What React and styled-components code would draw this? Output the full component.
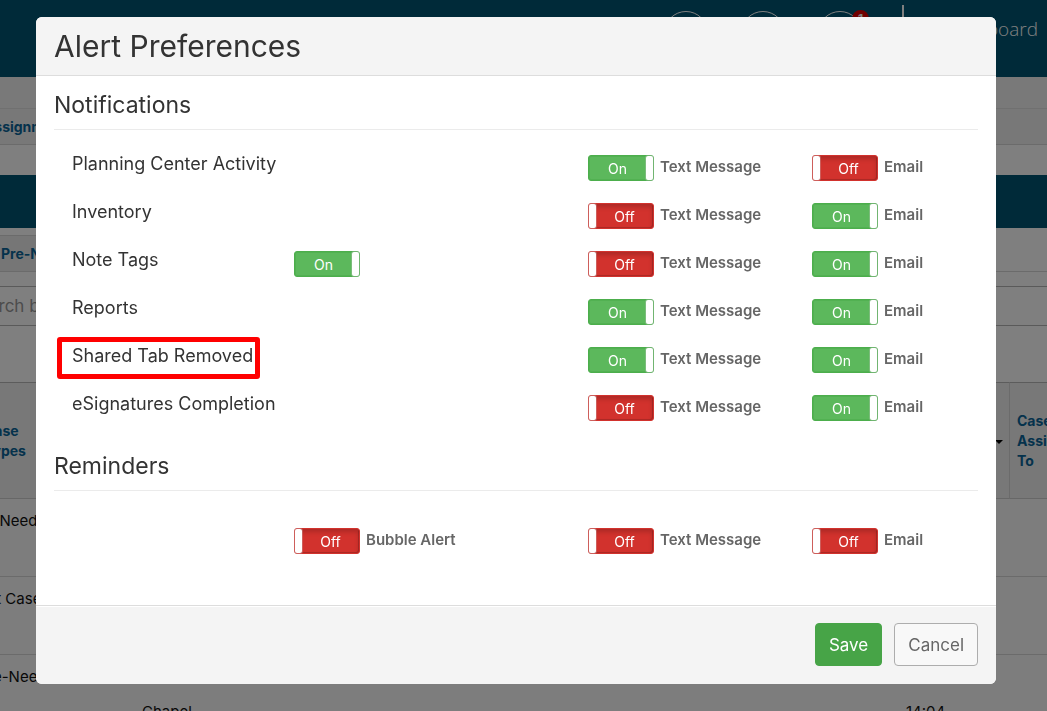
import React, { useState } from 'react';
import styled, { createGlobalStyle, css } from 'styled-components';

const ALERTS = [
	{ name: 'Planning Center Activity', text: true, email: false },
	{ name: 'Inventory', text: false, email: true },
	{ name: 'Note Tags', bubble: true, text: false, email: true },
	{ name: 'Reports', text: true, email: true },
	{ name: 'Shared Tab Removed', text: true, email: true, marked: true },
	{ name: 'eSignatures Completion', text: false, email: true },
];

const Toggle = ({ name, label, initial }) => {
	const [on, setOn] = useState(initial);

	return (
		<ToggleLabel>
			<Checkbox
				type="checkbox"
				aria-label={label ? undefined : name}
				checked={on}
				onChange={() => setOn(!on)}
			/>
			<Switch $on={on}>
				<SwitchText>{on ? 'On' : 'Off'}</SwitchText>
				<Handle />
			</Switch>
			{label}
		</ToggleLabel>
	);
};

const CasesPage = () => (
	<Page>
		<TopBar>
			<Circle />
			<Circle />
			<Circle>
				<Badge>1</Badge>
			</Circle>
			<Divider />
			<TopLink href="#dashboard">Dashboard</TopLink>
		</TopBar>
		<Content>
			<Spacer />
			<Tabs>
				<TabLink href="#assignments">Assignments</TabLink>
			</Tabs>
			<Gap />
			<Banner />
			<SubTabs>
				<SubTabLink href="#pre-need">Pre-Need</SubTabLink>
			</SubTabs>
			<Search type="text" aria-label="Search" placeholder="Search by name" />
			<Table>
				<colgroup>
					<Col $width={164} />
					<Col $width={764} />
					<Col $width={113} />
					<Col $width={200} />
				</colgroup>
				<thead>
					<tr>
						<Th $first>
							Case
							<br />
							Types
						</Th>
						<Th />
						<Th $sorted>
							<Caret viewBox="0 0 8 4">
								<path d="M0 0h8L4 4z" />
							</Caret>
						</Th>
						<Th $line>
							Case
							<br />
							Assigned
							<br />
							To
						</Th>
					</tr>
				</thead>
				<tbody>
					<tr>
						<Td>At-Need</Td>
						<Td />
						<Td />
						<Td />
					</tr>
					<tr>
						<Td>Pet Case</Td>
						<Td />
						<Td />
						<Td />
					</tr>
					<tr>
						<Td>Pre-Need</Td>
						<Td $low>Chapel</Td>
						<Td $low>14:04</Td>
						<Td />
					</tr>
				</tbody>
			</Table>
		</Content>
	</Page>
);

const App = () => (
	<>
		<GlobalStyle />
		<CasesPage />
		<Backdrop>
			<Modal role="dialog" aria-labelledby="alert-title">
				<ModalHeader>
					<Title id="alert-title">Alert Preferences</Title>
				</ModalHeader>
				<ModalBody>
					<SectionTitle>Notifications</SectionTitle>
					<Rows>
						{ALERTS.map(({ name, bubble, text, email, marked }) => (
							<Row key={name}>
								<RowName $marked={marked}>{name}</RowName>
								<Cell>
									{bubble !== undefined && (
										<Toggle name={name} initial={bubble} />
									)}
								</Cell>
								<Toggle label="Text Message" initial={text} />
								<Toggle label="Email" initial={email} />
							</Row>
						))}
					</Rows>
					<SectionTitle $spaced>Reminders</SectionTitle>
					<Rows $loose>
						<Row>
							<Cell />
							<Toggle label="Bubble Alert" initial={false} />
							<Toggle label="Text Message" initial={false} />
							<Toggle label="Email" initial={false} />
						</Row>
					</Rows>
				</ModalBody>
				<ModalFooter>
					<Button type="button" $primary>
						Save
					</Button>
					<Button type="button">Cancel</Button>
				</ModalFooter>
			</Modal>
		</Backdrop>
	</>
);

const GlobalStyle = createGlobalStyle`
	* {
		box-sizing: border-box;
	}
	body {
		margin: 0;
		overflow: hidden;
		font-family: Inter, 'Open Sans', sans-serif;
		color: #333;
	}
`;

const Page = styled.div`
	height: 100vh;
	overflow: hidden;
	background: #fff;
`;

const TopBar = styled.header`
	display: flex;
	align-items: flex-start;
	justify-content: flex-end;
	gap: 33px;
	height: 77px;
	padding: 5px 9px 0 0;
	background: #005472;
`;

const Circle = styled.span`
	position: relative;
	width: 44px;
	height: 44px;
	margin-top: 6px;
	border: 1px solid #fff;
	border-radius: 50%;
`;

const Badge = styled.span`
	position: absolute;
	top: -2px;
	right: -8px;
	width: 17px;
	height: 17px;
	border-radius: 50%;
	background: #e00000;
	color: #fff;
	font-size: 12px;
	font-weight: 700;
	line-height: 17px;
	text-align: center;
`;

const Divider = styled.span`
	width: 2px;
	height: 50px;
	margin-left: 7px;
	background: #fff;
`;

const TopLink = styled.a`
	width: 101px;
	color: #fff;
	font-family: 'Open Sans', sans-serif;
	font-size: 19px;
	font-weight: 300;
	line-height: 48px;
	text-align: right;
	text-decoration: none;
`;

/* the list is scrolled sideways behind the dialog */
const Content = styled.main`
	margin-left: -32px;
`;

const Spacer = styled.div`
	height: 31px;
	background: #f2f2f2;
`;

const Tabs = styled.nav`
	display: flex;
	align-items: center;
	height: 37px;
	padding-left: 16px;
	border-top: 1px solid #e0e0e0;
	border-bottom: 1px solid #d6d6d6;
	background: #f0f0f0;
`;

const SubTabs = styled.nav`
	display: flex;
	height: 37px;
	margin-top: 7px;
	border-bottom: 1px solid #d6d6d6;
`;

const TabLink = styled.a`
	color: #0a6498;
	font-size: 14px;
	font-weight: 700;
	text-decoration: none;
`;

const SubTabLink = styled(TabLink)`
	flex: 0 1 600px;
	padding-left: 33px;
	border-top: 1px solid #d6d6d6;
	background: #ececec;
	line-height: 35px;
`;

const Gap = styled.div`
	height: 30px;
`;

const Banner = styled.div`
	height: 53px;
	background: #005472;
`;

const Search = styled.input`
	display: block;
	width: 100%;
	height: 40px;
	margin: 14px 0 56px;
	padding: 0;
	border: solid #b4b4b4;
	border-width: 1px 0;
	font-family: inherit;
	font-size: 17px;
	&::placeholder {
		color: #999;
	}
`;

const Table = styled.table`
	width: 1241px;
	table-layout: fixed;
	border-spacing: 0;
	font-size: 15px;
	line-height: 20px;
`;

const Col = styled.col`
	width: ${(props) => props.$width}px;
`;

const Th = styled.th`
	height: 117px;
	padding: 0 6px 0 ${(props) => (props.$first ? '16px' : '7px')};
	border-top: 1px solid #b8b8b8;
	border-bottom: 1px solid #cfcfcf;
	border-left: ${(props) => (props.$line ? '1px solid #d6d6d6' : 0)};
	background: #f0f0f0;
	color: #0a6498;
	font-size: 14px;
	text-align: ${(props) => (props.$sorted ? 'right' : 'left')};
`;

const Caret = styled.svg`
	display: inline-block;
	width: 8px;
	height: 4px;
	vertical-align: middle;
	fill: #000;
`;

const Td = styled.td`
	height: 78px;
	padding: ${(props) => (props.$low ? '47px' : '12px')} 10px 0;
	border-bottom: 1px solid #d6d6d6;
	background: #fbfbfb;
	color: #111;
	vertical-align: top;
`;

const Backdrop = styled.div`
	position: fixed;
	inset: 0;
	overflow: hidden;
	padding: 17px 51px 0 36px;
	background: rgba(0, 0, 0, 0.5);
`;

const Modal = styled.section`
	overflow: hidden;
	border-radius: 6px;
	background: #fff;
`;

const ModalHeader = styled.header`
	padding: 11px 18px;
	border-bottom: 1px solid #ddd;
	background: #f4f4f4;
`;

const Title = styled.h1`
	margin: 0;
	font-size: 30px;
	font-weight: 400;
	line-height: 36px;
`;

const ModalBody = styled.div`
	padding: 14px 18px 40px;
`;

const SectionTitle = styled.h2`
	margin: ${(props) => (props.$spaced ? '19px' : 0)} 0 0;
	padding-bottom: 9px;
	border-bottom: 1px solid #ebebeb;
	font-size: 23px;
	font-weight: 400;
	line-height: 30px;
`;

const Rows = styled.div`
	padding-top: ${(props) => (props.$loose ? '26px' : '14px')};
`;

const Row = styled.div`
	display: grid;
	grid-template-columns: 222fr 294fr 224fr 166fr;
	align-items: start;
	height: 48px;
	padding: 10px 0 0 18px;
`;

const Cell = styled.div``;

const RowName = styled.span`
	position: relative;
	justify-self: start;
	font-size: 18px;
	line-height: 20px;
	white-space: nowrap;
	${(props) =>
		props.$marked &&
		css`
			&::after {
				content: '';
				position: absolute;
				inset: -9px -7px -13px -15px;
				border: 5px solid #f00;
				border-radius: 3px;
			}
		`}
`;

const ToggleLabel = styled.label`
	position: relative;
	display: flex;
	gap: 6px;
	padding-top: 1px;
	color: #666;
	font-size: 15px;
	font-weight: 600;
	line-height: 24px;
	cursor: pointer;
`;

const Checkbox = styled.input`
	position: absolute;
	width: 66px;
	height: 26px;
	margin: 0;
	opacity: 0;
	cursor: pointer;
`;

const Switch = styled.span`
	display: flex;
	flex-direction: ${(props) => (props.$on ? 'row' : 'row-reverse')};
	width: 66px;
	height: 26px;
	border: 1px solid ${(props) => (props.$on ? '#4cae4c' : '#d2322d')};
	border-radius: 3px;
	background: ${(props) => (props.$on ? '#5cb85c' : '#d2322d')};
	box-shadow: ${(props) =>
		props.$on
			? 'inset 0 0 0 1px #52b152'
			: 'inset 0 3px 5px rgba(0, 0, 0, 0.18), inset -1px -1px 0 #b02a26'};
`;

const SwitchText = styled.span`
	flex: 1;
	padding-top: 1px;
	color: #fff;
	font-size: 14px;
	font-weight: 400;
	text-align: center;
`;

const Handle = styled.span`
	width: 7px;
	border-radius: 2px;
	background: #fff;
	box-shadow: 0 0 0 1px rgba(200, 200, 200, 0.3);
`;

const ModalFooter = styled.footer`
	display: flex;
	justify-content: flex-end;
	gap: 12px;
	padding: 17px 18px 18px;
	border-top: 1px solid #ddd;
	background: #f4f4f4;
	box-shadow: inset 0 1px 0 #fff;
`;

const Button = styled.button`
	height: 43px;
	padding: 0 13px;
	border: 1px solid ${(props) => (props.$primary ? '#47a447' : '#adadad')};
	border-radius: 4px;
	background: ${(props) => (props.$primary ? '#47a447' : '#f8f8f8')};
	color: ${(props) => (props.$primary ? '#fff' : '#666')};
	font-family: inherit;
	font-size: 17px;
	cursor: pointer;
`;

export default App;
